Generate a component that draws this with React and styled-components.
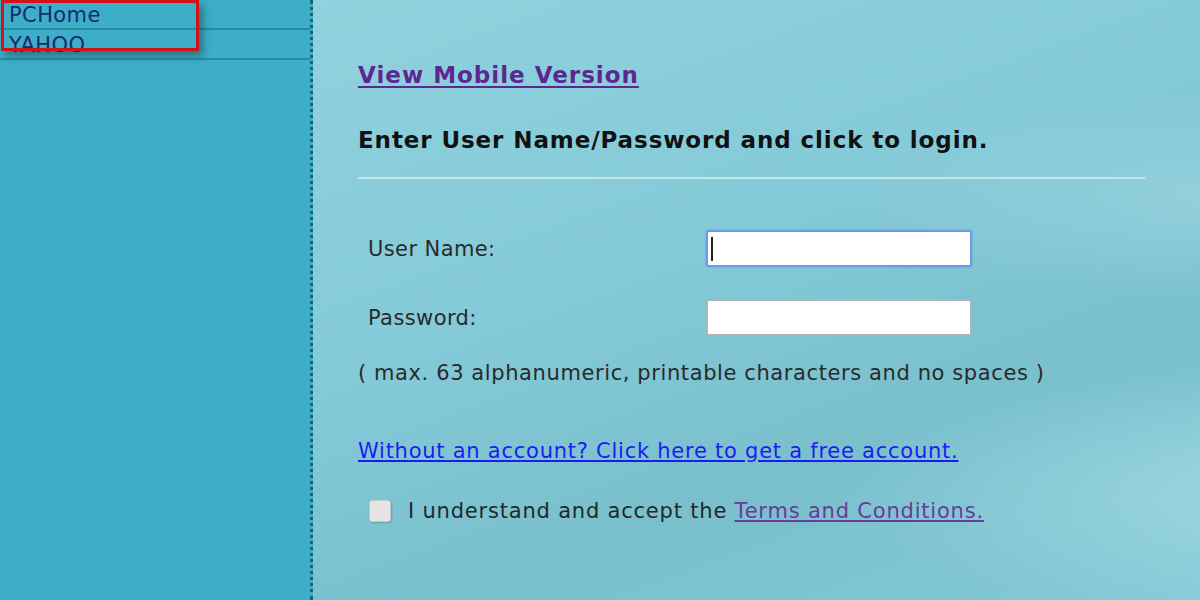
import React from 'react';
import styled, { createGlobalStyle } from 'styled-components';

const GlobalStyle = createGlobalStyle`
    html, body {
        margin: 0;
        padding: 0;
        background: #82c8d7;
    }
    body {
        font-family: 'DejaVu Sans', Verdana, sans-serif;
    }
`;

const sites = ['PCHome', 'YAHOO'];

function App() {
    return (
        <>
            <GlobalStyle />
            <Page>
                <Sidebar>
                    <SiteList>
                        {sites.map(site => (
                            <SiteRow key={site}>{site}</SiteRow>
                        ))}
                    </SiteList>
                    <Highlight />
                </Sidebar>
                <Main>
                    <MobileLink href="#">View Mobile Version</MobileLink>
                    <Heading>Enter User Name/Password and click to login.</Heading>
                    <Rule />
                    <Form>
                        <FieldRow>
                            <Label>User Name:</Label>
                            <TextInput focused>
                                <Caret />
                            </TextInput>
                        </FieldRow>
                        <FieldRow>
                            <Label>Password:</Label>
                            <TextInput />
                        </FieldRow>
                    </Form>
                    <Hint>( max. 63 alphanumeric, printable characters and no spaces )</Hint>
                    <SignupLink href="#">
                        Without an account? Click here to get a free account.
                    </SignupLink>
                    <AcceptRow>
                        <Checkbox />
                        <span>
                            I understand and accept the{' '}
                            <TermsLink href="#">Terms and Conditions.</TermsLink>
                        </span>
                    </AcceptRow>
                </Main>
            </Page>
        </>
    );
}

// styles

const Page = styled.div`
    display: flex;
    width: 1200px;
    height: 600px;
    overflow: hidden;
`;

const Sidebar = styled.aside`
    position: relative;
    width: 310px;
    flex-shrink: 0;
    background: #3daec8;
    border-right: 3px dotted #1f5f72;
`;

const SiteList = styled.ul`
    list-style: none;
    margin: 0;
    padding: 0;
`;

const SiteRow = styled.li`
    height: 28px;
    line-height: 30px;
    padding-left: 9px;
    font-size: 21px;
    letter-spacing: 0.4px;
    color: #172a70;
    border-bottom: 2px solid #2b8aa3;
    overflow: hidden;
`;

const Highlight = styled.div`
    position: absolute;
    left: 1px;
    top: 0;
    width: 192px;
    height: 45px;
    border: 3px solid #d3121c;
    box-shadow: 4px 5px 8px rgba(0, 0, 0, 0.35);
    pointer-events: none;
`;

const Main = styled.main`
    flex: 1;
    display: flex;
    flex-direction: column;
    align-items: flex-start;
    padding: 61px 55px 0 45px;
    background:
        radial-gradient(ellipse 900px 240px at 115% 82%, rgba(175, 228, 238, 0.6) 0%, rgba(175, 228, 238, 0) 55%),
        radial-gradient(ellipse 650px 180px at 105% 33%, rgba(165, 218, 230, 0.55) 0%, rgba(165, 218, 230, 0) 60%),
        linear-gradient(160deg, #90d2de 0%, #85cad8 40%, #79bfcc 70%, #85c9d6 100%);
    color: #2a2a2a;
`;

const MobileLink = styled.a`
    font-size: 23px;
    line-height: 28px;
    letter-spacing: 1px;
    font-weight: bold;
    color: #5d2792;
    text-decoration: underline;
    text-underline-offset: 3px;
`;

const Heading = styled.h2`
    margin: 37px 0 0;
    font-size: 23px;
    line-height: 28px;
    letter-spacing: 0.9px;
    font-weight: bold;
    color: #111;
`;

const Rule = styled.hr`
    align-self: stretch;
    margin: 23px 0 0;
    border: none;
    height: 2px;
    background: #c8e6ec;
`;

const Form = styled.div`
    display: flex;
    flex-direction: column;
    gap: 32px;
    margin-top: 51px;
`;

const FieldRow = styled.div`
    display: flex;
    align-items: center;
`;

const Label = styled.span`
    width: 338px;
    padding-left: 10px;
    font-size: 21px;
    letter-spacing: 0.4px;
    color: #2a2a2a;
`;

const TextInput = styled.div`
    position: relative;
    width: 262px;
    height: 33px;
    background: #fff;
    border: 2px solid ${props => (props.focused ? '#6b9be6' : '#a9b7bb')};
    border-radius: 3px;
    ${props => props.focused && 'box-shadow: 0 0 2px rgba(70, 120, 220, 0.6);'}
`;

const Caret = styled.span`
    position: absolute;
    left: 3px;
    top: 5px;
    width: 2px;
    height: 24px;
    background: #222;
`;

const Hint = styled.p`
    margin: 24px 0 0;
    font-size: 21px;
    line-height: 26px;
    letter-spacing: 0.6px;
    color: #2a2a2a;
`;

const SignupLink = styled.a`
    margin-top: 52px;
    font-size: 21px;
    line-height: 26px;
    letter-spacing: 0.75px;
    color: #1c1cf0;
    text-decoration: underline;
`;

const AcceptRow = styled.label`
    display: flex;
    align-items: center;
    gap: 17px;
    margin-top: 34px;
    padding-left: 11px;
    font-size: 21px;
    line-height: 26px;
    letter-spacing: 0.8px;
    color: #1f2a2a;
`;

const Checkbox = styled.span`
    width: 20px;
    height: 20px;
    background: #e6e4e4;
    border: 1px solid #c9c9c9;
    border-radius: 3px;
    box-shadow: 1px 1px 2px rgba(0, 0, 0, 0.2);
`;

const TermsLink = styled.a`
    color: #6b3a9a;
    text-decoration: underline;
`;

export default App;
